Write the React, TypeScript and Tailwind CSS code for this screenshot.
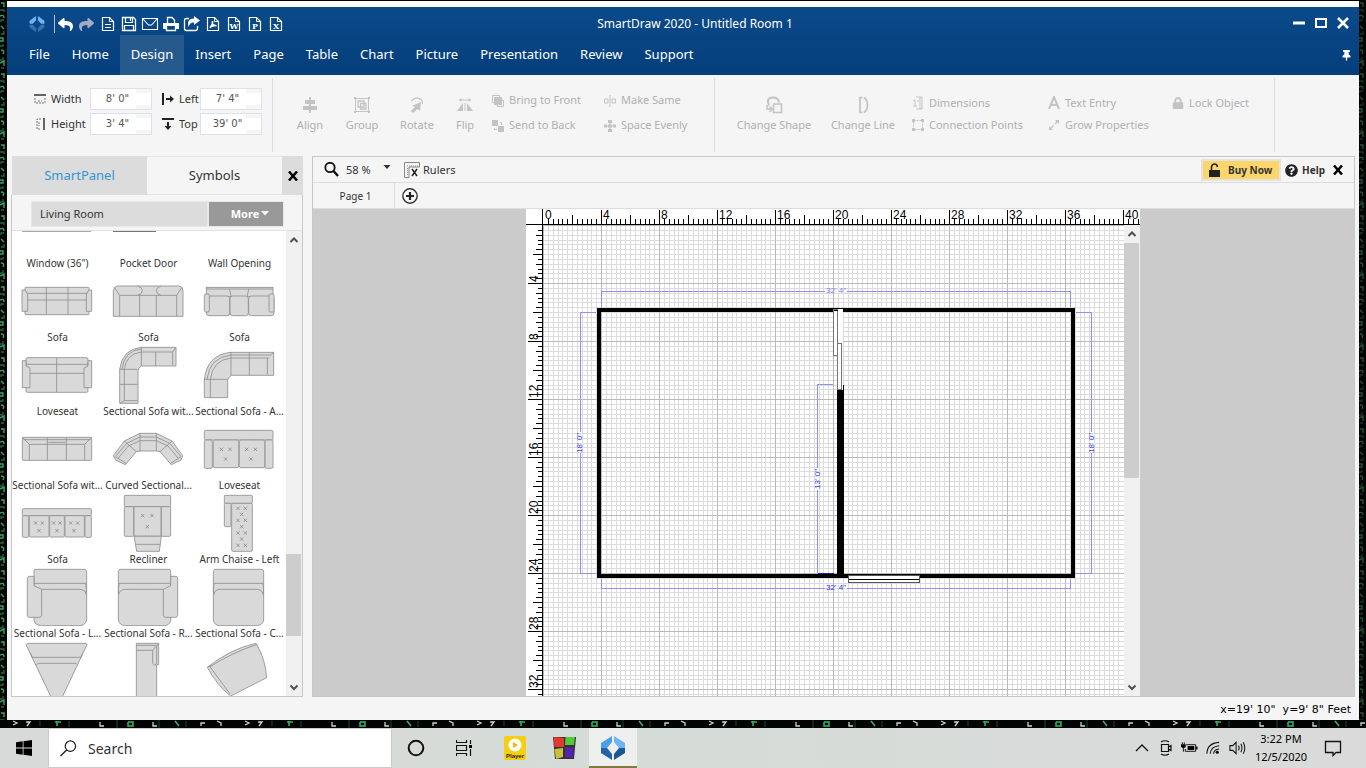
import React from "react";
import { FaReply, FaShare, FaLock, FaQuestionCircle, FaThumbtack } from "react-icons/fa";

type Kids = { children?: React.ReactNode };

function Pic({ box, w, h, children }: Kids & { box: string; w: number; h: number }) {
  return (
    <svg viewBox={box} width={w} height={h} className="shrink-0" aria-hidden="true">
      {children}
    </svg>
  );
}

/* ---------- title bar ---------- */

function Logo({ size, top, bottom }: { size: number; top: string; bottom: string }) {
  return (
    <Pic box="0 0 48 50" w={size} h={size}>
      <path d="M1 24V15L21 0V13L11 24Z" fill={top} />
      <path d="M47 24V15L27 0V13L37 24Z" fill={top} />
      <path d="M1 27V36L21 50V38L11 27Z" fill={bottom} />
      <path d="M47 27V36L27 50V38L37 27Z" fill={bottom} />
    </Pic>
  );
}

function PageIcon({ letter, children }: Kids & { letter?: string }) {
  return (
    <Pic box="0 0 16 18" w={16} h={18}>
      <path d="M2.5 2.5H9.5L13.5 6.5V15.5H2.5Z" fill="none" stroke="#fff" strokeWidth="1.2" />
      <path d="M9.5 2.5V6.5H13.5" fill="none" stroke="#fff" />
      {letter && (
        <text x="8" y="14" textAnchor="middle" fill="#fff" fontSize="8" fontWeight="700" fontFamily="DejaVu Serif, serif">
          {letter}
        </text>
      )}
      {children}
    </Pic>
  );
}

function QuickButton({ label, children }: Kids & { label: string }) {
  return (
    <button aria-label={label} className="flex h-[18px] w-[21px] items-center justify-center">
      {children}
    </button>
  );
}

const menus = ["File", "Home", "Design", "Insert", "Page", "Table", "Chart", "Picture", "Presentation", "Review", "Support"];

function Header() {
  return (
    <header className="shrink-0 border-t border-black bg-white pt-1.5">
      <div className="bg-linear-to-b from-[#0b4a8a] to-[#053e7b] text-white">
        <div className="relative flex h-7 items-end justify-between pr-2.5 pb-0.5 pl-[22px]">
          <div className="flex items-center">
            <Logo size={16} top="#6db3f5" bottom="#3672b2" />
            <span className="ml-[9px] h-[18px] w-px bg-[#a9bdd6]" />
            <QuickButton label="Undo"><FaReply size={15} /></QuickButton>
            <QuickButton label="Redo"><FaShare size={15} color="#a5abc2" /></QuickButton>
            <QuickButton label="New">
              <PageIcon><path d="M5 9.5H11M5 12.5H11" stroke="#fff" /></PageIcon>
            </QuickButton>
            <QuickButton label="Save">
              <Pic box="0 0 16 18" w={16} h={18}>
                <path d="M1.5 2.5H12.5L14.5 4.5V15.5H1.5Z" fill="none" stroke="#fff" strokeWidth="1.3" />
                <path d="M4.5 2.5V7.5H11.5V2.5M3.5 15.5V10.5H12.5V15.5M9.5 3V6" fill="none" stroke="#fff" strokeWidth="1.2" />
              </Pic>
            </QuickButton>
            <QuickButton label="Mail">
              <Pic box="0 0 18 18" w={18} h={18}>
                <path d="M1.5 3.5H16.5V14.5H1.5ZM2 4L7.5 10H10.5L16 4" fill="none" stroke="#fff" strokeWidth="1.1" />
              </Pic>
            </QuickButton>
            <QuickButton label="Print">
              <Pic box="0 0 18 18" w={18} h={18}>
                <path d="M5.5 8V2.5H10L12.5 5V8" fill="none" stroke="#fff" strokeWidth="1.3" />
                <path d="M1 8H17V14H14V11H4V14H1Z" fill="#fff" />
                <path d="M4.5 11V15.5H13.5V11" fill="none" stroke="#fff" strokeWidth="1.3" />
              </Pic>
            </QuickButton>
            <QuickButton label="Share">
              <Pic box="0 0 18 18" w={18} h={18}>
                <path d="M6 3.5H3.5Q1.5 3.5 1.5 5.5V13.5Q1.5 15.5 3.5 15.5H12.5Q14.5 15.5 14.5 13.5V11" fill="none" stroke="#fff" strokeWidth="1.3" />
                <path d="M11 1L17 5.5L11 10V7.5Q7 7 5.5 12Q3 3.5 11 3.5Z" fill="#fff" />
              </Pic>
            </QuickButton>
            <QuickButton label="PDF">
              <PageIcon><path d="M7.5 6V9L5 13M7.5 9.5L11.5 11M5 12L9.5 10.5" fill="none" stroke="#fff" strokeWidth="1.6" /></PageIcon>
            </QuickButton>
            <QuickButton label="Word"><PageIcon letter="W" /></QuickButton>
            <QuickButton label="PowerPoint"><PageIcon letter="P" /></QuickButton>
            <QuickButton label="Excel"><PageIcon letter="X" /></QuickButton>
          </div>
          <div className="flex items-center gap-[9px] pb-1">
            <button aria-label="Minimize">
              <Pic box="0 0 12 12" w={12} h={12}><path d="M0 6H12" stroke="#fff" strokeWidth="3" /></Pic>
            </button>
            <button aria-label="Maximize">
              <Pic box="0 0 14 12" w={14} h={12}><path d="M2 2H12V10H2Z" fill="none" stroke="#fff" strokeWidth="2" /></Pic>
            </button>
            <button aria-label="Close">
              <Pic box="0 0 12 12" w={12} h={12}><path d="M1 1L11 11M11 1L1 11" stroke="#fff" strokeWidth="2.6" /></Pic>
            </button>
          </div>
          <h1 className="pointer-events-none absolute inset-x-0 bottom-0 pl-6 text-center text-[12px] leading-[22px]">
            SmartDraw 2020 - Untitled Room 1
          </h1>
        </div>
        <nav className="flex h-10 items-center pr-[7px] pl-[11px] text-[13px]">
          {menus.map((m) => (
            <button key={m} className={m === "Design" ? "h-10 bg-[#265a8c] px-[11px]" : "h-10 px-[11px]"}>
              {m}
            </button>
          ))}
          <button aria-label="Pin ribbon" className="ml-auto"><FaThumbtack size={11} /></button>
        </nav>
      </div>
    </header>
  );
}

/* ---------- ribbon ---------- */

function SizeField({ id, label, value, icon }: { id: string; label: string; value: string; icon: React.ReactNode }) {
  return (
    <>
      {icon}
      <label htmlFor={id} className="text-[#333]">{label}</label>
      <span className="flex h-[22px] w-[62px] border border-[#dbe2eb]">
        <input id={id} defaultValue={value} className="w-[45px] min-w-0 bg-white pl-2 text-center font-['DejaVu_Sans',sans-serif] text-[10px] text-[#555] outline-none" />
        <span className="flex-1 border-y-4 border-[#f5f5f5] bg-white" />
      </span>
    </>
  );
}

function BigTool({ label, width, children }: Kids & { label: string; width: string }) {
  return (
    <button className={`flex flex-col items-center gap-[3px] pt-[18px] leading-4 ${width}`}>
      <span className="flex h-[18px] items-center">{children}</span>
      {label}
    </button>
  );
}

function SmallTool({ label, height, children }: Kids & { label: string; height: string }) {
  return (
    <button className={`flex items-center gap-[5px] whitespace-nowrap ${height}`}>
      {children}
      {label}
    </button>
  );
}

const G = "#c3c3c3";

function Ribbon() {
  return (
    <section className="flex h-[81px] shrink-0 pt-[3px] pb-1 text-[11px] text-[#b0b0b0]">
      <div className="grid w-[266px] shrink-0 grid-cols-[17px_39px_72px_17px_21px_62px] content-start items-center gap-y-[3px] border-r border-[#dcdcdc] pt-2.5 pl-[27px] leading-4">
        <SizeField id="w" label="Width" value={`8' 0"`} icon={
          <Pic box="0 0 12 12" w={12} h={12}>
            <path d="M0 2H12" stroke="#333" strokeWidth="1.5" />
            <path d="M1 5V10H11V5M4 8H8" fill="none" stroke="#777" strokeDasharray="2 1" />
          </Pic>} />
        <SizeField id="l" label="Left" value={`7' 4"`} icon={
          <Pic box="0 0 12 12" w={12} h={12}>
            <path d="M1 0V12" stroke="#222" strokeWidth="2" />
            <path d="M4 6H10" stroke="#222" strokeWidth="2" /><path d="M8 2.5L12 6L8 9.5Z" fill="#222" />
          </Pic>} />
        <SizeField id="h" label="Height" value={`3' 4"`} icon={
          <Pic box="0 0 12 12" w={12} h={12}>
            <path d="M10 0V12" stroke="#333" strokeWidth="1.5" />
            <path d="M7 1H3V11H7M5 4V8" fill="none" stroke="#777" strokeDasharray="2 1" />
          </Pic>} />
        <SizeField id="t" label="Top" value={`39' 0"`} icon={
          <Pic box="0 0 12 12" w={12} h={12}>
            <path d="M0 1H12" stroke="#222" strokeWidth="2" />
            <path d="M6 4V10" stroke="#222" strokeWidth="2" /><path d="M2.5 8L6 12L9.5 8Z" fill="#222" />
          </Pic>} />
      </div>

      <div className="flex w-[442px] shrink-0 items-start border-r border-[#dcdcdc] pl-[11px]">
        <BigTool label="Align" width="w-[52px]">
          <Pic box="0 0 14 16" w={14} h={16}>
            <path d="M7 0V16" stroke={G} strokeWidth="2" /><path d="M2 3H12V7H2ZM0 9H14V13H0Z" fill={G} />
          </Pic>
        </BigTool>
        <BigTool label="Group" width="w-[52px]">
          <Pic box="0 0 16 16" w={16} h={16}>
            <path d="M1.5 1.5H14.5V14.5H1.5Z" fill="none" stroke={G} />
            <path d="M4 4H10V10H4ZM6.5 6.5H12V12H6.5Z" fill="none" stroke={G} strokeWidth="1.3" />
            <path d="M0 0H2V2H0ZM14 0H16V2H14ZM0 14H2V16H0ZM14 14H16V16H14Z" fill={G} />
          </Pic>
        </BigTool>
        <BigTool label="Rotate" width="w-[58px]">
          <Pic box="0 0 14 16" w={14} h={16}>
            <path d="M1.5 4Q6 -1.5 11 2.5Q13 4.5 12 7" fill="none" stroke={G} strokeWidth="1.2" />
            <path d="M11 5L10 14L7.5 12L3 16L1 14L5 10L2 9Z" fill={G} />
          </Pic>
        </BigTool>
        <BigTool label="Flip" width="w-[38px]">
          <Pic box="0 0 16 14" w={16} h={14}>
            <path d="M2 2H14" stroke={G} /><path d="M2 2L4.5 0V4ZM14 2L11.5 0V4Z" fill={G} />
            <path d="M6 5V13H0ZM10 5V13H16Z" fill={G} /><path d="M8 5V13" stroke={G} />
          </Pic>
        </BigTool>
        <div className="ml-2 w-[112px] pt-2.5">
          <SmallTool label="Bring to Front" height="h-[25px]">
            <Pic box="0 0 12 12" w={12} h={12}>
              <path d="M.5 .5H7.5V7.5H.5ZM5.5 5.5H11.5V11.5H5.5Z" fill="#f5f5f5" stroke={G} /><path d="M2 2H10V10H2Z" fill={G} />
            </Pic>
          </SmallTool>
          <SmallTool label="Send to Back" height="h-[25px]">
            <Pic box="0 0 12 12" w={12} h={12}>
              <path d="M0 0H6V6H0ZM6 6H12V12H6Z" fill={G} /><path d="M8 2.5H9.5V5M2.5 8V9.5H5" fill="none" stroke={G} />
            </Pic>
          </SmallTool>
        </div>
        <div className="pt-2.5">
          <SmallTool label="Make Same" height="h-[25px]">
            <Pic box="0 0 12 12" w={12} h={12}>
              <path d="M6 0V12" stroke={G} /><path d="M.5 4H4V8H.5ZM8 4H11.5V8H8Z" fill="none" stroke={G} />
            </Pic>
          </SmallTool>
          <SmallTool label="Space Evenly" height="h-[25px]">
            <Pic box="0 0 12 12" w={12} h={12}>
              <path d="M6 0V12M0 6H12" stroke={G} />
              <path d="M4 0H8V3H4ZM4 4.5H8V7.5H4ZM4 9H8V12H4ZM0 4.5H3V7.5H0ZM9 4.5H12V7.5H9Z" fill={G} />
            </Pic>
          </SmallTool>
        </div>
      </div>

      <div className="flex w-[560px] shrink-0 items-start border-r border-[#dcdcdc] pl-[13px]">
        <BigTool label="Change Shape" width="w-[92px]">
          <Pic box="0 0 17 18" w={17} h={18}>
            <path d="M3 9.5Q-.5 1.5 7 1.5Q12.500 1.5 13 6.5" fill="none" stroke={G} strokeWidth="2" />
            <path d="M7.5 8H15.5V16.500H7.5Z" fill="none" stroke={G} strokeWidth="1.5" />
            <path d="M1 9V13H6M3.5 10.500L6.500 13L3.5 16" fill="none" stroke={G} strokeWidth="1.5" />
          </Pic>
        </BigTool>
        <BigTool label="Change Line" width="w-[86px]">
          <Pic box="0 0 11 18" w={11} h={18}>
            <path d="M4.5 1.5H2V16.5H4.5M6 1.5Q9.5 4 9.5 9T6 16.5" fill="none" stroke={G} strokeWidth="1.7" />
          </Pic>
        </BigTool>
        <div className="ml-1.5 w-[136px] pt-3.5">
          <SmallTool label="Dimensions" height="h-[22px]">
            <Pic box="0 0 12 14" w={12} h={14}>
              <path d="M1 5L3 4V10M1 10H5M6 4V6M4 1H10V13H4M8 1V13" fill="none" stroke={G} />
            </Pic>
          </SmallTool>
          <SmallTool label="Connection Points" height="h-[22px]">
            <Pic box="0 0 12 12" w={12} h={12}>
              <path d="M1.5 1.5H10.5V10.5H1.5Z" fill="none" stroke={G} strokeDasharray="2 1" />
              <path d="M0 0H3V3H0ZM9 0H12V3H9ZM0 9H3V12H0ZM9 9H12V12H9Z" fill={G} />
            </Pic>
          </SmallTool>
        </div>
        <div className="w-[124px] pt-3.5">
          <SmallTool label="Text Entry" height="h-[22px]">
            <Pic box="0 0 12 14" w={12} h={14}><path d="M1 13L6 1L11 13M3 9H9" fill="none" stroke={G} strokeWidth="2" /></Pic>
          </SmallTool>
          <SmallTool label="Grow Properties" height="h-[22px]">
            <Pic box="0 0 12 12" w={12} h={12}>
              <path d="M2 10L10 2" stroke={G} strokeWidth="1.3" strokeDasharray="5 2" /><path d="M7 1H11V5ZM1 7V11H5Z" fill={G} />
            </Pic>
          </SmallTool>
        </div>
        <div className="pt-3.5">
          <SmallTool label="Lock Object" height="h-[22px]"><FaLock size={12} color={G} /></SmallTool>
        </div>
      </div>
    </section>
  );
}

/* ---------- symbol gallery ---------- */

function Tufts({ at }: { at: number[][] }) {
  return (
    <path d={at.map(([x, y]) => `M${x - 5} ${y - 5}L${x + 5} ${y + 5}M${x + 5} ${y - 5}L${x - 5} ${y + 5}`).join("")} stroke="#777" strokeWidth="2" />
  );
}

type Sym = { name: string; box?: string; art?: React.ReactNode };

const rows: Sym[][] = [
  [
    {
      name: "Sofa", box: "45 366 255 174",
      art: <>
        <rect x="75" y="412" width="192" height="82" rx="3" />
        <path d="M75 430H267M80 450H262M139 412V494M204 412V494" />
        <path d="M66 420H76L83 434V484H66ZM275 420H266L259 434V484H275Z" />
      </>,
    },
    {
      name: "Sofa", box: "318 366 255 174",
      art: <>
        <path d="M352 408H537Q549 410 549 422V499H340V422Q341 409 352 408Z" />
        <path d="M344 413L359 436M545 413L530 436M359 436H530M359 436V499M530 436V499M419 436V499M469 436V499M413 408Q427 412 427 422T413 436M483 408Q469 412 469 422T483 436" />
      </>,
    },
    {
      name: "Sofa", box: "591 366 255 174",
      art: <>
        <rect x="619" y="412" width="200" height="28" />
        <rect x="619" y="438" width="70" height="59" rx="8" /><rect x="690" y="438" width="55" height="59" rx="8" /><rect x="746" y="438" width="76" height="59" rx="8" />
        <path d="M619 417H819M689 417L693 438M746 417L742 438" />
        <rect x="613" y="432" width="15" height="54" rx="4" /><rect x="807" y="432" width="15" height="54" rx="4" />
      </>,
    },
  ],
  [
    {
      name: "Loveseat", box: "45 18 255 174",
      art: <>
        <rect x="78" y="53" width="186" height="104" rx="4" /><path d="M78 73H264M85 100H258M170 53V157" />
        <path d="M67 62H78V78L90 84V143H67ZM275 62H264V78L252 84V143H275Z" />
      </>,
    },
    {
      name: "Sectional Sofa wit...", box: "318 18 255 174",
      art: <>
        <path d="M424 22H528V78H424Q414 84 414 92V190H359V88Q366 28 424 22Z" />
        <path d="M424 36H518V76M424 22V78M467 36V78M518 36L527 23M359 88H412M359 133H412M373 88V182H412M373 182L360 190M424 36Q378 42 373 88M424 27Q372 32 366 88" />
      </>,
    },
    {
      name: "Sectional Sofa - A...", box: "591 18 255 174",
      art: <>
        <path d="M693 37H821V106H695Q684 112 683 120V173H613V120Q620 44 693 37Z" />
        <path d="M693 45H812M693 54H808M812 45L821 38M802 54V104M693 37V106M748 37V106M613 118H683M631 118V173M621 118Q628 52 693 45M631 118Q638 60 693 54" />
      </>,
    },
  ],
  [
    {
      name: "Sectional Sofa wit...", box: "45 240 255 174",
      art: <>
        <rect x="67" y="292" width="208" height="69" rx="2" />
        <path d="M67 292L88 313V361M275 292L254 313V361M70 299H272M88 313H254M142 292V361M199 292V361M145 307H196" />
      </>,
    },
    {
      name: "Curved Sectional...", box: "318 240 255 174",
      art: <>
        <path d="M340 347L373 303L420 280H469L516 303L548 347L543 360L514 374L480 335L469 333H420L409 335L376 374L347 360Z" />
        <path d="M373 303L409 335M516 303L480 335M420 280V333M469 280V333M420 291H469M420 302H469M346 350L380 310L420 291M355 354L385 318L420 302M543 350L509 310L469 291M534 354L504 318L469 302M346 350L378 370M543 350L512 370" />
      </>,
    },
    {
      name: "Loveseat", box: "591 240 255 174",
      art: <>
        <rect x="613" y="271" width="206" height="29" rx="4" /><rect x="613" y="300" width="24" height="85" rx="4" /><rect x="795" y="300" width="24" height="85" rx="4" />
        <rect x="640" y="300" width="76" height="83" rx="5" /><rect x="718" y="300" width="76" height="83" rx="5" />
        <Tufts at={[[664, 328], [690, 328], [677, 357], [740, 328], [766, 328], [753, 357]]} />
      </>,
    },
  ],
  [
    {
      name: "Sofa", box: "45 462 255 174",
      art: <>
        <rect x="67" y="506" width="207" height="21" rx="3" /><rect x="67" y="527" width="19" height="65" rx="3" /><rect x="255" y="527" width="19" height="65" rx="3" />
        <rect x="88" y="527" width="59" height="64" rx="3" /><rect x="149" y="527" width="44" height="64" rx="3" /><rect x="195" y="527" width="58" height="64" rx="3" />
        <Tufts at={[[107, 549], [127, 549], [117, 572], [161, 549], [180, 549], [171, 572], [212, 549], [233, 549], [222, 572]]} />
      </>,
    },
    {
      name: "Recliner", box: "318 462 255 174",
      art: <>
        <rect x="373" y="466" width="139" height="34" rx="3" /><rect x="373" y="500" width="28" height="89" rx="3" /><rect x="484" y="500" width="28" height="89" rx="3" />
        <path d="M402 588L410 634H478L484 588Z" /><path d="M407 613H481" />
        <rect x="402" y="500" width="81" height="88" rx="3" />
        <Tufts at={[[428, 527], [456, 527], [442, 560]]} />
      </>,
    },
    {
      name: "Arm Chaise - Left", box: "591 462 255 174",
      art: <>
        <rect x="673" y="466" width="84" height="24" rx="2" /><rect x="673" y="490" width="20" height="70" rx="3" /><rect x="695" y="490" width="62" height="144" rx="4" />
        <Tufts at={[[714, 505], [736, 505], [725, 523], [714, 541], [736, 541], [725, 560], [714, 579], [736, 579], [725, 597], [714, 616], [736, 616]]} />
      </>,
    },
  ],
  [
    {
      name: "Sectional Sofa - L...", box: "45 114 255 174",
      art: <>
        <path d="M104 118H256Q260 122 260 130V270Q256 286 240 287H120Q106 285 102 272V122Z" />
        <path d="M102 160H258M124 178H240Q258 180 259 196M257 160Q260 175 258 190" />
        <path d="M86 139H102V167L125 178V256Q124 262 118 262H86Q82 260 82 256V145Z" />
      </>,
    },
    {
      name: "Sectional Sofa - R...", box: "318 114 255 174",
      art: <>
        <path d="M359 118H509Q512 120 512 126V272Q508 286 494 287H374Q358 285 355 270V124Z" />
        <path d="M356 160H512M356 194Q358 180 374 178H490M358 160Q354 175 356 190" />
        <path d="M512 139H529Q533 141 533 148V256Q532 262 527 262H496Q490 261 490 256V178L512 167Z" />
      </>,
    },
    {
      name: "Sectional Sofa - C...", box: "591 114 255 174",
      art: <>
        <path d="M644 118H786Q791 120 791 126V270Q788 285 772 287H658Q642 285 640 270V124Z" />
        <path d="M641 160H790M641 196Q642 180 658 178H772Q788 180 790 196M642 160Q639 175 641 190M789 160Q792 175 790 190" />
      </>,
    },
  ],
  [
    {
      name: "", box: "45 336 255 174",
      art: <>
        <path d="M82 340H258L261 344L185 505H155L78 344Z" />
        <path d="M95 382H244M108 406L114 400H228L234 406M92 370L97 382M248 370L243 382" />
      </>,
    },
    {
      name: "", box: "318 336 255 174",
      art: <>
        <path d="M409 340H476V404H470V510H409Z" /><path d="M409 346H470M409 361H458V400Q464 410 470 402V350L476 341M458 361L470 347" />
      </>,
    },
    {
      name: "", box: "591 336 255 174",
      art: <>
        <path d="M768 340Q692 356 622 412Q650 465 692 498L800 443Q796 385 768 340Z" /><path d="M770 344Q700 366 630 410L690 492M622 412L634 406" />
      </>,
    },
  ],
];

function ScrollArrow({ up }: { up?: boolean }) {
  return (
    <Pic box="0 0 16 18" w={16} h={18}>
      <path d={up ? "M4.5 11L8 7.5L11.5 11" : "M4.5 7.5L8 11L11.5 7.5"} fill="none" stroke="#505050" strokeWidth="2" />
    </Pic>
  );
}

function SymbolPanel() {
  return (
    <aside className="ml-1 flex w-[292px] shrink-0 flex-col">
      <div className="flex h-[39px] shrink-0 text-[13px]">
        <button className="ml-px w-[135px] bg-[#dcdcdc] pt-px text-[#3197d2]">SmartPanel</button>
        <button className="flex-1 border-y border-[#e6e6e6] bg-[#f5f5f5] pt-px text-[#333]">Symbols</button>
        <button aria-label="Close panel" className="flex w-[21px] items-center justify-center bg-[#dcdcdc]">
          <Pic box="0 0 10 10" w={10} h={10}><path d="M1 .5L9 9.5M9 .5L1 9.5" stroke="#000" strokeWidth="2.5" /></Pic>
        </button>
      </div>
      <div className="flex min-h-0 flex-1 flex-col border-x border-b border-[#c8c8c8]">
        <div className="flex h-9 shrink-0 border-b border-[#dbe2ec] pt-1.5 pr-[18px] pb-[3px] pl-[19px] text-[11px]">
          <button className="flex-1 border border-[#e8e8e8] bg-[#dcdcdc] pl-2 text-left text-[#333]">Living Room</button>
          <button className="flex w-[76px] items-center justify-center gap-0.5 border border-[#e8e8e8] bg-[#999] pl-2 font-bold text-white">
            More
            <Pic box="0 0 8 6" w={8} h={6}><path d="M0 0H8L4 4.5Z" fill="#fff" /></Pic>
          </button>
        </div>
        <div className="flex min-h-0 flex-1 overflow-hidden bg-white text-[10px] leading-[14px] text-[#333]">
          <div className="min-w-0 flex-1 overflow-hidden">
            <div className="grid h-[39px] grid-cols-[91px_91px_91px] text-center">
              {['Window (36")', "Pocket Door", "Wall Opening"].map((n, i) => (
                <div key={n} className="flex flex-col justify-between">
                  <Pic box="0 0 91 2" w={91} h={2}>
                    {i === 0 && <path d="M10 .5H79" stroke="#aaa" />}
                    {i === 1 && <path d="M10 .5H53" stroke="#777" />}
                  </Pic>
                  <span>{n}</span>
                </div>
              ))}
            </div>
            {rows.map((row, r) => (
              <div key={r} className="grid h-[74px] grid-cols-[91px_91px_91px]">
                {row.map((s, c) => (
                  <div key={c} className="flex flex-col items-center pt-0.5 whitespace-nowrap">
                    <svg viewBox={s.box} width="85" height="58" className="shrink-0 overflow-hidden" fill="#d9d9d9" stroke="#8e8e8e" strokeWidth="2.5" aria-hidden="true">
                      {s.art}
                    </svg>
                    <span>{s.name}</span>
                  </div>
                ))}
              </div>
            ))}
          </div>
          <div className="flex w-4 shrink-0 flex-col bg-[#f0f0f0]">
            <ScrollArrow up />
            <div className="flex-305" />
            <div className="mr-px h-[82px] bg-[#cdcdcd]" />
            <div className="flex-42" />
            <ScrollArrow />
          </div>
        </div>
      </div>
    </aside>
  );
}

/* ---------- drawing area ---------- */

const STEP = 58 / 12;
const ticks = Array.from({ length: 125 }, (_, i) => i);

function TopRuler() {
  return (
    <svg viewBox="526 209 614 16" width="614" height="16" className="block shrink-0 bg-white" fontFamily="Liberation Sans, sans-serif" fontSize="12">
      <g shapeRendering="crispEdges" fill="#000">
        <rect x="526" y="224" width="614" height="1" />
        <rect x="542" y="209" width="1" height="16" />
        {ticks.map((i) => {
          const len = i % 12 === 0 ? 14 : i % 6 === 0 ? 9 : 5;
          return i > 0 && <rect key={i} x={543 + Math.round(i * STEP)} y={224 - len} width="1" height={len} />;
        })}
      </g>
      {Array.from({ length: 11 }, (_, k) => (
        <text key={k} x={545 + k * 58} y="219">{k * 4}</text>
      ))}
    </svg>
  );
}

function Dim({ d, x, y, text, turn, color = "#7d7df5" }: { d: string; x: number; y: number; text: string; turn?: boolean; color?: string }) {
  return (
    <g>
      <path d={d} fill="none" stroke="#8f8ff5" shapeRendering="crispEdges" />
      <text x={x} y={y} textAnchor="middle" fill={color} transform={turn ? `rotate(-90 ${x} ${y})` : undefined}>{text}</text>
    </g>
  );
}

function FloorPlan() {
  return (
    <svg viewBox="526 225 598 471" width="598" height="471" className="block shrink-0 bg-white" fontFamily="Liberation Sans, sans-serif" fontSize="8">
      <g shapeRendering="crispEdges">
        {ticks.slice(0, 120).map((i) => i % 12 !== 0 && <rect key={i} x={543 + Math.round(i * STEP)} y="225" width="1" height="471" fill="#dcdcdc" />)}
        {ticks.slice(0, 98).map((i) => i % 12 !== 0 && <rect key={i} x="543" y={225 + Math.round(i * STEP)} width="581" height="1" fill="#dcdcdc" />)}
        {ticks.slice(0, 10).map((k) => <rect key={k} x={543 + k * 58} y="225" width="1" height="471" fill="#b9b9b9" />)}
        {ticks.slice(0, 9).map((k) => <rect key={k} x="543" y={225 + k * 58} width="581" height="1" fill="#b9b9b9" />)}
        <rect x="542" y="225" width="1" height="471" />
        {ticks.slice(1, 98).map((i) => {
          const len = i % 12 === 0 ? 14 : i % 6 === 0 ? 9 : i % 3 === 2 ? 6 : 4;
          return <rect key={i} x={542 - len} y={225 + Math.round(i * STEP)} width={len} height="1" />;
        })}
      </g>
      <g fontSize="12">
        {ticks.slice(1, 9).map((k) => (
          <text key={k} transform={`translate(538 ${224 + k * 58}) rotate(-90)`}>{k * 4}</text>
        ))}
      </g>

      <Dim d="M601.5 307V291.5H825M847 291.5H1070.5V307" x={836} y={293} text={`32' 4"`} />
      <Dim d="M596 312.5H580.5V432M580.5 453V573.5H596" x={582} y={443} text={`18' 0"`} turn color="#3a3af0" />
      <Dim d="M1076 312.5H1091.5V432M1091.5 453V573.5H1076" x={1094} y={443} text={`18' 0"`} turn color="#3a3af0" />
      <Dim d="M833 384.5H817.5V468M817.5 490V573.5H833" x={820} y={479} text={`13' 0"`} turn color="#3a3af0" />

      <g shapeRendering="crispEdges">
        <rect x="599" y="310" width="474" height="266" fill="none" stroke="#000" strokeWidth="4" />
        <rect x="837" y="390" width="7" height="184" />
        <rect x="843" y="385" width="1" height="8" />
        <rect x="837" y="309" width="6" height="36" fill="#fff" />
        <rect x="833.5" y="309.5" width="4" height="46" fill="#fff" stroke="#777" />
        <rect x="834" y="310" width="4" height="1" />
        <rect x="837.5" y="343.5" width="4" height="46" fill="#fff" stroke="#777" />
        <rect x="848.5" y="575.5" width="71" height="7" fill="#fff" stroke="#555" />
        <rect x="849" y="579" width="70" height="1" />
        <rect x="818" y="573" width="16" height="1" fill="#2020a0" />
      </g>
      <Dim d="M601.5 579V588.5H825M847 588.5H1070.5V579" x={836} y={590} text={`32' 4"`} color="#2a2af0" />
    </svg>
  );
}

function DrawingArea() {
  return (
    <main className="mr-1 ml-[9px] flex min-w-0 flex-1 flex-col border border-[#c8c8c8] text-[#333]">
      <div className="flex h-[26px] shrink-0 items-center border-b border-[#dcdcdc] pt-px pr-[11px] pl-2.5 text-[11px]">
        <Pic box="0 0 16 16" w={16} h={16}>
          <circle cx="7" cy="5.5" r="4.7" fill="none" stroke="#111" strokeWidth="1.8" /><path d="M10.5 9L15 14" stroke="#111" strokeWidth="2.5" />
        </Pic>
        <button className="ml-[7px] flex items-center">
          <span className="w-[37px] text-left">58 %</span>
          <Pic box="0 0 8 12" w={8} h={12}><path d="M.5 1H7.5L4 5Z" fill="#333" /></Pic>
        </button>
        <button className="ml-[13px] flex items-center gap-[3px]">
          <Pic box="0 0 16 16" w={16} h={16}>
            <path d="M.5 .5H15.5V5H5V15.5H.5Z" fill="none" stroke="#888" /><path d="M3 4H14M3.5 6V14" stroke="#888" strokeDasharray="1 1" />
            <path d="M8 7L13 14M13 7L8 14" stroke="#222" strokeWidth="1.5" />
          </Pic>
          Rulers
        </button>
        <button className="ml-auto flex h-[22px] w-[80px] items-center gap-2 border-2 border-[#e3e4e2] bg-[#fdd66b] pl-1.5 text-[10px] font-bold whitespace-nowrap text-[#333]">
          <Pic box="0 0 11 14" w={11} h={14}>
            <path d="M2.5 7V4Q3 1 5.5 1T8.5 4" fill="none" stroke="#222" strokeWidth="1.6" /><path d="M0 7H11V14H0Z" fill="#222" />
          </Pic>
          Buy Now
        </button>
        <button className="ml-1 flex items-center gap-1 text-[10px] font-bold">
          <FaQuestionCircle size={13} color="#222" />
          Help
        </button>
        <button aria-label="Close document" className="ml-2">
          <Pic box="0 0 10 10" w={10} h={10}><path d="M1 .5L9 9.5M9 .5L1 9.5" stroke="#000" strokeWidth="2.5" /></Pic>
        </button>
      </div>
      <div className="flex h-[26px] shrink-0 items-center border-b border-[#dcdcdc] text-[10px]">
        <button className="h-full w-[82px] border-r border-[#dcdcdc] pt-px pl-1">Page 1</button>
        <button aria-label="Add page" className="ml-[7px]">
          <Pic box="0 0 16 16" w={16} h={16}>
            <circle cx="8" cy="8" r="7.2" fill="none" stroke="#333" strokeWidth="1.4" /><path d="M8 4V12M4 8H12" stroke="#222" strokeWidth="2.2" />
          </Pic>
        </button>
      </div>
      <div className="flex min-h-0 flex-1 justify-center overflow-hidden bg-[#cbcbcb] pr-px">
        <div className="flex w-[614px] flex-col">
          <TopRuler />
          <div className="flex min-h-0 flex-1 overflow-hidden">
            <FloorPlan />
            <div className="flex flex-1 flex-col bg-[#f0f0f0]">
              <ScrollArrow up />
              <div className="mr-px h-[235px] bg-[#cdcdcd]" />
              <div className="flex-1" />
              <ScrollArrow />
            </div>
          </div>
        </div>
      </div>
    </main>
  );
}

/* ---------- desktop wallpaper and taskbar ---------- */

function Rain({ id, across }: { id: string; across?: boolean }) {
  return (
    <svg width="100%" height="100%" className="block" aria-hidden="true">
      <defs>
        {across ? (
          <pattern id={id} width="232" height="8" patternUnits="userSpaceOnUse">
            <path d="M13 1L17 3L13 5M26 2H30L27 6M153 2V6H157M217 1L221 3V6M100 2V6H104M201 6V3H205" stroke="#ccd8d0" fill="none" strokeWidth="1.3" />
            <path d="M55 2H61M57 1V6M128 2H133V6H128V2M175 1L179 6" stroke="#2fb765" fill="none" strokeWidth="1.5" />
            <path d="M117 0V8M159 0V8M186 1V7M69 1V7M40 1V6" stroke="#174a2b" fill="none" />
          </pattern>
        ) : (
          <pattern id={id} width="7" height="71" patternUnits="userSpaceOnUse">
            <path d="M1 3H4V7M0 16Q4 14 4 18M1 26L4 29M0 38H3V41H0M1 50Q5 50 3 54M0 63L4 61V66" stroke="#36a562" fill="none" strokeWidth="1.4" />
            <path d="M0 10H4V12M1 22V20H4M1 34H4V31M0 46H3V44M3 57V60H0M1 68H4" stroke="#23683f" fill="none" strokeWidth="1.3" />
          </pattern>
        )}
      </defs>
      <rect width="100%" height="100%" fill={`url(#${id})`} />
    </svg>
  );
}

function Taskbar() {
  return (
    <footer className="flex h-10 shrink-0 bg-linear-to-r from-[#d8dad9] via-[#d5dcd8] to-[#dadada] text-black">
      <button aria-label="Start" className="flex w-12 items-center justify-center">
        <Pic box="0 0 16 16" w={16} h={16}>
          <path d="M0 2.3L6.7 1.3V7.6H0ZM7.5 1.2L16 0V7.6H7.5ZM0 8.4H6.7V14.7L0 13.7ZM7.5 8.4H16V16L7.5 14.8Z" />
        </Pic>
      </button>
      <label className="flex w-[344px] items-center gap-[11px] border border-[#c9cbca] bg-white pl-[11px]">
        <Pic box="0 0 18 18" w={17} h={17}>
          <circle cx="11" cy="6.5" r="5.5" fill="none" stroke="#222" strokeWidth="1.3" /><path d="M7 10.5L.5 17" stroke="#222" strokeWidth="1.5" />
        </Pic>
        <input aria-label="Search" placeholder="Search" className="min-w-0 flex-1 text-[14px] outline-none placeholder:text-[#333]" />
      </label>
      <button aria-label="Cortana" className="flex w-12 items-center justify-center">
        <Pic box="0 0 18 18" w={18} h={18}><circle cx="9" cy="9" r="7.3" fill="none" stroke="#111" strokeWidth="2" /></Pic>
      </button>
      <button aria-label="Task view" className="flex w-12 items-center justify-center">
        <Pic box="0 0 16 16" w={16} h={16}>
          <path d="M.5 0V2.5H10.5V0M.5 5.5H10.5V10.5H.5ZM.5 16V13.5H10.5V16M14.5 0V4M14.5 9V16" fill="none" stroke="#111" strokeWidth="1.2" /><path d="M13 5H16V8H13Z" />
        </Pic>
      </button>
      <button aria-label="Player" className="flex w-[54px] items-center justify-center">
        <Pic box="0 0 24 24" w={24} h={24}>
          <rect x="1" width="22" height="24" rx="2" fill="#f6ce14" /><circle cx="12" cy="9" r="6.5" fill="#fff" /><path d="M10 6L15 9L10 12Z" fill="#f0b90b" />
          <text x="12" y="22" textAnchor="middle" fontSize="6" fontWeight="700" fontFamily="Liberation Sans, sans-serif" fill="#222">Player</text>
        </Pic>
      </button>
      <button aria-label="Color blocks" className="flex w-[47px] items-center justify-center pr-1">
        <Pic box="0 0 24 24" w={24} h={24}>
          <path d="M1 1H24L22 23H3Z" fill="#333" />
          <path d="M1.5 1L12 2V11H2.5Z" fill="#e23a2c" /><path d="M13.5 1H23L22 9H13Z" fill="#4fca3a" />
          <path d="M2.5 13L11 12V21L4 23Z" fill="#c9c13a" /><path d="M13 11L22 12L21 22L13 21Z" fill="#5822b0" />
        </Pic>
      </button>
      <button aria-label="SmartDraw" className="flex w-12 items-center justify-center border-b-2 border-[#85793f] bg-[#eef0ef] pt-0.5">
        <Pic box="0 0 24 24" w={24} h={24}>
          <path d="M11 0V6L6 12H0V7Z" fill="#4f9de8" /><path d="M13 0V6L18 12H24V7Z" fill="#6db3f5" />
          <path d="M11 24V18L6 12H0V17Z" fill="#2463a8" /><path d="M13 24V18L18 12H24V17Z" fill="#1d5796" />
        </Pic>
      </button>
      <div className="ml-auto flex items-center pr-6">
        <div className="flex items-center gap-2">
          <Pic box="0 0 14 16" w={14} h={16}><path d="M1 11L7 5L13 11" fill="none" stroke="#111" strokeWidth="1.3" /></Pic>
          <Pic box="0 0 16 16" w={16} h={16}>
            <path d="M4.5 4.5H11.5V11.5H4.5ZM11.5 7L14 5.5V10.5L11.5 9M4 2Q8 -.5 12 2M4 14Q8 16.5 12 14" fill="none" stroke="#111" strokeWidth="1.2" />
          </Pic>
          <Pic box="0 0 18 16" w={17} h={16}>
            <path d="M5.5 4.5H15.5V11.5H4.5V9" fill="none" stroke="#111" /><path d="M7 6H14V10H7ZM16 6.5H17.5V9.5H16ZM0 4H5V7Q2.5 9 0 7Z" /><path d="M1.5 2V4M3.5 2V4M2.5 8V12" stroke="#111" />
          </Pic>
          <Pic box="0 0 16 16" w={15} h={16}>
            <path d="M1 14Q1 3 14 2M4.5 14Q5 6.5 14 5.5M8 14Q8.5 9.5 14 9" fill="none" stroke="#111" strokeWidth="1.1" /><circle cx="12" cy="12.5" r="1.7" />
          </Pic>
          <Pic box="0 0 18 16" w={17} h={16}>
            <path d="M1 5.5H4L7.5 2V14L4 10.5H1ZM10 5.5Q11.5 8 10 10.5M12.5 3.5Q15 8 12.5 12.5M15 2Q18.5 8 15 14" fill="none" stroke="#111" strokeWidth="1.1" />
          </Pic>
        </div>
        <button className="w-[68px] pl-0.5 text-center text-[11px] leading-[18px] whitespace-nowrap">
          3:22 PM<br />12/5/2020
        </button>
        <button aria-label="Notifications" className="ml-2.5">
          <Pic box="0 0 18 18" w={18} h={18}><path d="M1.5 2.5H16.5V13.5H12L9 16.5V13.5H1.5Z" fill="none" stroke="#111" strokeWidth="1.3" /></Pic>
        </button>
      </div>
    </footer>
  );
}

export default function App() {
  return (
    <div className="flex h-screen flex-col overflow-hidden bg-[#020403] font-['Noto_Sans',sans-serif]">
      <div className="flex min-h-0 flex-1">
        <div className="w-[7px] shrink-0"><Rain id="rain-left" /></div>
        <div className="flex min-w-0 flex-1 flex-col bg-[#f5f5f5]">
          <Header />
          <Ribbon />
          <div className="flex min-h-0 flex-1">
            <SymbolPanel />
            <DrawingArea />
          </div>
          <div className="flex h-[23px] shrink-0 items-center justify-end pt-[3px] pr-2 font-['DejaVu_Sans',sans-serif] text-[11px] whitespace-pre text-black">
            {`x=19' 10"  y=9' 8" Feet`}
          </div>
        </div>
        <div className="w-[7px] shrink-0 opacity-50"><Rain id="rain-right" /></div>
      </div>
      <div className="h-2 shrink-0"><Rain id="rain-bottom" across /></div>
      <Taskbar />
    </div>
  );
}
